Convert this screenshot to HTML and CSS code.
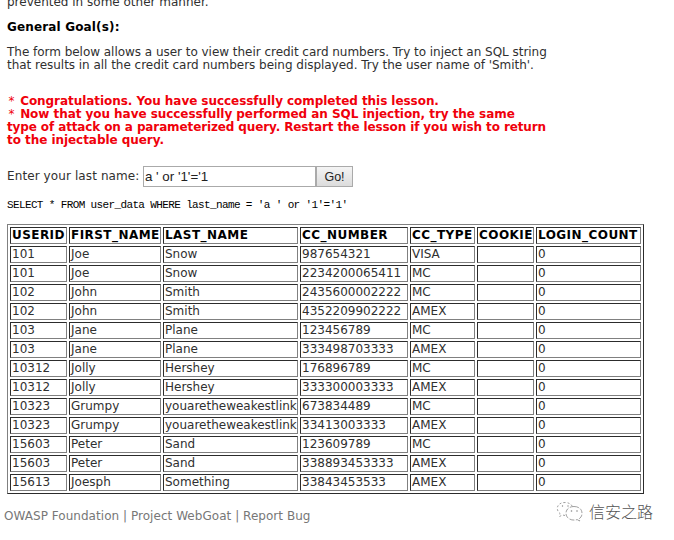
FILE: index.html
```
<!DOCTYPE html>
<html lang="en">
<head>
<meta charset="utf-8">
<title>SQL Injection</title>
<link rel="stylesheet" href="styles.css">
</head>
<body>
<main class="lesson">
<p class="intro">prevented in some other manner.</p>
<h1 class="heading">General Goal(s):</h1>
<p class="goal">The form below allows a user to view their credit card numbers. Try to inject an SQL string<br>that results in all the credit card numbers being displayed. Try the user name of 'Smith'.</p>
<p class="message"><span class="star">*</span> Congratulations. You have successfully completed this lesson.<br><span class="star">*</span> Now that you have successfully performed an SQL injection, try the same<br><span class="tight">type of attack on a parameterized query. Restart the lesson if you wish to return</span><br>to the injectable query.</p>
<form class="query-form"><label class="label" for="name">Enter your last name:</label><input class="field" id="name" type="text" value="a ' or '1'='1"><button class="go" type="button">Go!</button></form>
<pre class="sql">SELECT * FROM user_data WHERE last_name = 'a ' or '1'='1'</pre>
<table class="results">
<colgroup><col class="c-id"><col class="c-first"><col class="c-last"><col class="c-number"><col class="c-type"><col class="c-cookie"><col class="c-count"></colgroup>
<thead><tr><th>USERID</th><th>FIRST_NAME</th><th>LAST_NAME</th><th>CC_NUMBER</th><th>CC_TYPE</th><th>COOKIE</th><th>LOGIN_COUNT</th></tr></thead>
<tbody>
<tr><td>101</td><td>Joe</td><td>Snow</td><td>987654321</td><td>VISA</td><td></td><td>0</td></tr>
<tr><td>101</td><td>Joe</td><td>Snow</td><td>2234200065411</td><td>MC</td><td></td><td>0</td></tr>
<tr><td>102</td><td>John</td><td>Smith</td><td>2435600002222</td><td>MC</td><td></td><td>0</td></tr>
<tr><td>102</td><td>John</td><td>Smith</td><td>4352209902222</td><td>AMEX</td><td></td><td>0</td></tr>
<tr><td>103</td><td>Jane</td><td>Plane</td><td>123456789</td><td>MC</td><td></td><td>0</td></tr>
<tr><td>103</td><td>Jane</td><td>Plane</td><td>333498703333</td><td>AMEX</td><td></td><td>0</td></tr>
<tr><td>10312</td><td>Jolly</td><td>Hershey</td><td>176896789</td><td>MC</td><td></td><td>0</td></tr>
<tr><td>10312</td><td>Jolly</td><td>Hershey</td><td>333300003333</td><td>AMEX</td><td></td><td>0</td></tr>
<tr><td>10323</td><td>Grumpy</td><td>youaretheweakestlink</td><td>673834489</td><td>MC</td><td></td><td>0</td></tr>
<tr><td>10323</td><td>Grumpy</td><td>youaretheweakestlink</td><td>33413003333</td><td>AMEX</td><td></td><td>0</td></tr>
<tr><td>15603</td><td>Peter</td><td>Sand</td><td>123609789</td><td>MC</td><td></td><td>0</td></tr>
<tr><td>15603</td><td>Peter</td><td>Sand</td><td>338893453333</td><td>AMEX</td><td></td><td>0</td></tr>
<tr><td>15613</td><td>Joesph</td><td>Something</td><td>33843453533</td><td>AMEX</td><td></td><td>0</td></tr>
</tbody>
</table>
</main>
<footer class="footer">
<span class="links">OWASP Foundation | Project WebGoat | Report Bug</span>
<span class="brand" lang="zh-CN">
<svg class="brand-icon" width="28" height="22" viewBox="0 0 28 22" fill="none" stroke="#888" stroke-width=".8">
<path stroke-dasharray="2 2" d="M9 14.500 6.500 14 3.500 15.500 4 12.500C-1 8.500 1 1.500 9 1.500c4 0 7 2 7.800 5"/>
<path stroke-dasharray="5 1.500" d="M18 5.500c5 0 8 3 8 6.800 0 2.400-1 4.200-2.800 5.400l.5 2.300-2.500-1.400c-6 1.800-11.200-1.500-11.200-6.300 0-3.800 3-6.800 8-6.800z"/>
<g fill="#888" stroke="none"><circle cx="6.500" cy="5" r=".7"/><circle cx="12" cy="5" r=".7"/><circle cx="15.500" cy="10" r=".8"/><circle cx="21" cy="10" r=".8"/></g>
</svg>
<span class="brand-name">信安之路</span>
</span>
</footer>
</body>
</html>
```
FILE: styles.css
```
* { box-sizing: border-box; }
body {
  margin: 0;
  width: 674px;
  height: 540px;
  overflow: hidden;
  background: #fff;
  color: #303030;
  font: 12px/13px "DejaVu Sans", sans-serif;
  white-space: nowrap;
}
.lesson { padding-left: 7px; }
.intro { margin: -4px 0 0; }
.heading { margin: 12px 0 0; font-size: 12px; line-height: 13px; letter-spacing: 0.15px; color: #000; }
.goal { margin: 12px 0 0; letter-spacing: -0.03px; }
.message { margin: 23px 0 0; color: #f0000b; font-weight: bold; letter-spacing: -0.05px; }
.star { display: inline-block; width: 9px; text-align: center; font-weight: normal; }
.tight { letter-spacing: -0.12px; }
.query-form { display: flex; align-items: center; height: 21px; margin: 19px 0 0; }
.label { width: 136px; letter-spacing: 0.1px; }
.field {
  width: 173px;
  height: 21px;
  padding: 0 1px;
  border: 1px solid #aaa;
  background: #fff;
  color: #222;
  font: 13.33px "Liberation Sans", sans-serif;
}
.go {
  width: 37px;
  height: 21px;
  padding: 0;
  border: 1px solid #aaa;
  background: linear-gradient(#f4f4f4, #dcdcdc);
  color: #222;
  font: 12.5px "Liberation Sans", sans-serif;
}
.sql {
  margin: 12px 0 0;
  color: #000;
  font: 11px/13px "Liberation Mono", monospace;
  letter-spacing: -0.63px;
}
.results {
  width: 637px;
  margin-top: 12px;
  table-layout: fixed;
  border-collapse: separate;
  border-spacing: 2px;
  border: 1px solid;
  border-color: #808080 #2c2c2c #2c2c2c #808080;
}
.results th, .results td {
  height: 17px;
  padding: 1px;
  border: 1px solid;
  border-color: #2c2c2c #808080 #808080 #2c2c2c;
  line-height: 13px;
  text-align: left;
}
.results th { color: #000; letter-spacing: 0.45px; }
.c-id { width: 57px; }
.c-first { width: 92px; }
.c-last { width: 135px; }
.c-number { width: 108px; }
.c-type { width: 65px; }
.c-cookie { width: 57px; }
.c-count { width: 105px; }
.footer { display: flex; justify-content: space-between; padding: 4px 21px 0 4px; color: #777; }
.links { padding-top: 12px; letter-spacing: 0.04px; }
.brand { display: flex; align-items: center; gap: 4px; height: 28px; }
.brand-icon { position: relative; left: -1px; }
.brand-name { position: relative; top: -1px; color: #555; font: 300 16px/24px "Noto Sans CJK SC", sans-serif; }
```
